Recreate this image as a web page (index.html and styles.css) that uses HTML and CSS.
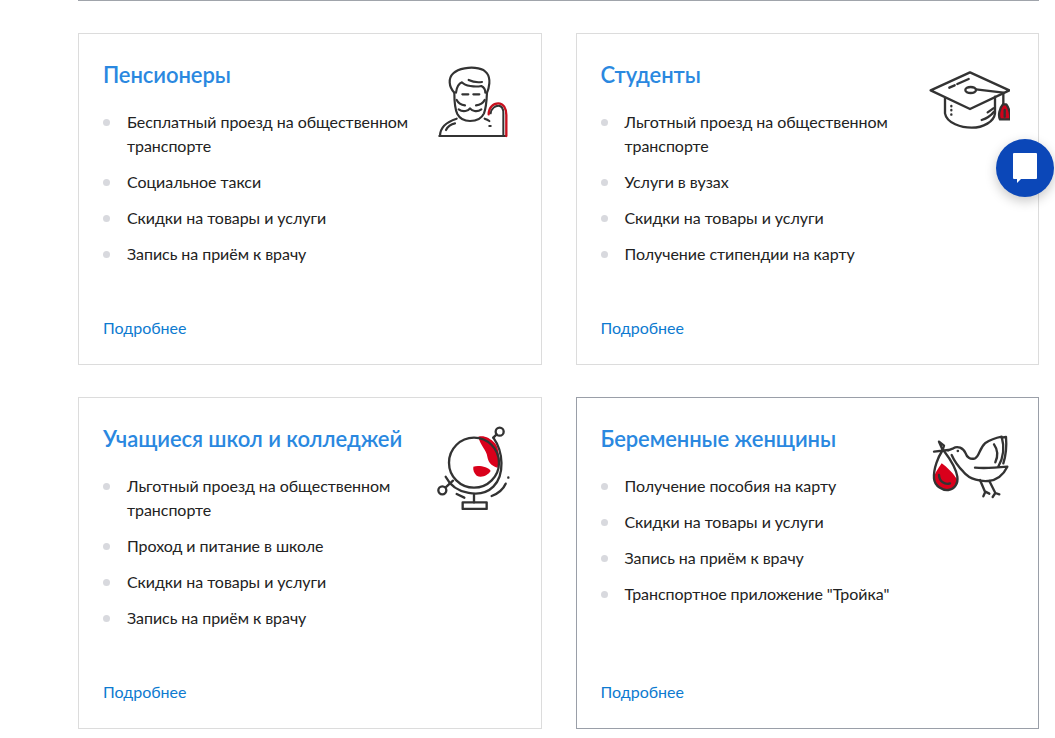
FILE: index.html
```html
<!DOCTYPE html>
<html lang="ru">
<head>
<meta charset="utf-8">
<title>Льготы</title>
<link rel="stylesheet" href="styles.css">
</head>
<body>
<main class="page">
  <section class="grid">
    <article class="card">
      <div class="body">
        <h2 class="title">Пенсионеры</h2>
        <ul class="list">
          <li>Бесплатный проезд на общественном транспорте</li>
          <li>Социальное такси</li>
          <li>Скидки на товары и услуги</li>
          <li>Запись на приём к врачу</li>
        </ul>
        <a class="more" href="#">Подробнее</a>
      </div>
      <svg class="icon" viewBox="24 36 252 252" fill="none" stroke="#333" stroke-width="6.500" stroke-linecap="round" stroke-linejoin="round">
        <path d="M103 128C86 110 84 85 100 70C115 55 150 50 175 55C197 59 210 75 208 100C207 110 205 120 201 128"/>
        <path d="M108 128C110 112 118 100 126 97C135 108 165 112 184 108C192 112 196 120 196 128"/>
        <path d="M146 90C158 96 172 98 186 96"/>
        <path d="M103 128C103 150 104 175 112 192C120 207 135 213 150 213C170 213 185 205 192 190C198 175 200 150 201 128"/>
        <path d="M110 150C114 158 122 164 135 166M194 150C190 158 182 164 168 166"/>
        <path d="M127 133H145M160 133H178"/>
        <path d="M116 178C130 188 145 182 150 175C156 182 170 188 184 178"/>
        <path d="M60 258C60 235 78 216 110 206M194 206C200 208 204 210 208 213"/>
        <path d="M78 240C84 228 94 222 105 220"/>
        <path d="M58 258H258"/>
        <path d="M208 228H212"/>
        <path d="M206 193C206 172 220 160 235 160C250 160 259 175 259 195V258" stroke="#c8101e" stroke-width="7"/>
        <path d="M212 190C214 175 226 167 235 167C245 167 250 176 250 190V258" stroke="#333" stroke-width="6"/>
      </svg>
    </article>

    <article class="card">
      <div class="body">
        <h2 class="title">Студенты</h2>
        <ul class="list">
          <li>Льготный проезд на общественном транспорте</li>
          <li>Услуги в вузах</li>
          <li>Скидки на товары и услуги</li>
          <li>Получение стипендии на карту</li>
        </ul>
        <a class="more" href="#">Подробнее</a>
      </div>
      <svg class="icon" viewBox="18 21 252 252" fill="none" stroke="#333" stroke-width="7" stroke-linecap="round" stroke-linejoin="round">
        <path d="M150 52L268 106L150 162L32 106Z"/>
        <path d="M88 98L104 91M112 87L146 72"/>
        <ellipse cx="152" cy="105" rx="16" ry="9"/>
        <path d="M168 103L250 113V148"/>
        <path d="M249 148C238 160 234 182 240 193H270C273 182 268 160 259 148Z" fill="#d0021b"/>
        <path d="M254 165V185"/>
        <path d="M75 130V175C80 205 125 218 155 218C190 218 222 200 225 175V125"/>
        <path d="M94 153V154M94 165V166M94 178V179"/>
        <path d="M203 172L220 160M185 195C200 190 214 180 222 170"/>
      </svg>
    </article>

    <article class="card">
      <div class="body">
        <h2 class="title">Учащиеся школ и колледжей</h2>
        <ul class="list">
          <li>Льготный проезд на общественном транспорте</li>
          <li>Проход и питание в школе</li>
          <li>Скидки на товары и услуги</li>
          <li>Запись на приём к врачу</li>
        </ul>
        <a class="more" href="#">Подробнее</a>
      </div>
      <svg class="icon" viewBox="9 33 252 252" fill="none" stroke="#333" stroke-width="7" stroke-linecap="round" stroke-linejoin="round">
        <path d="M160 65C175 60 195 68 210 85C222 100 225 130 218 158C205 155 190 145 187 125C185 105 165 90 160 65Z" fill="#d9001b" stroke="none"/>
        <path d="M145 155C160 150 190 155 197 168C190 180 170 190 155 182C148 175 143 165 145 155Z" fill="#d9001b" stroke="none"/>
        <circle cx="147" cy="143" r="75"/>
        <path d="M62 185C90 240 170 250 205 215C240 180 235 110 205 68"/>
        <circle cx="224" cy="50" r="12"/>
        <circle cx="52" cy="226" r="12"/>
        <path d="M205 68L215 58M62 217L84 197"/>
        <path d="M147 240V262"/>
        <rect x="113" y="262" width="72" height="20"/>
        <path d="M95 237L118 248M200 243C220 235 235 222 242 206M250 187V188"/>
      </svg>
    </article>

    <article class="card card-active">
      <div class="body">
        <h2 class="title">Беременные женщины</h2>
        <ul class="list">
          <li>Получение пособия на карту</li>
          <li>Скидки на товары и услуги</li>
          <li>Запись на приём к врачу</li>
          <li>Транспортное приложение "Тройка"</li>
        </ul>
        <a class="more" href="#">Подробнее</a>
      </div>
      <svg class="icon" viewBox="18 3 252 252" fill="none" stroke="#333" stroke-width="7" stroke-linecap="round" stroke-linejoin="round">
        <path d="M65 115C55 130 40 150 42 165C45 185 65 197 85 195C100 193 113 180 112 165C105 150 80 125 65 115Z" fill="#d9001b" stroke="none"/>
        <path d="M68 75C55 95 40 130 42 160C44 185 70 197 85 195C105 192 115 175 112 155C108 130 85 95 72 78"/>
        <path d="M57 50L68 75M42 80L85 75M68 75L72 62L57 50"/>
        <path d="M57 150C58 170 75 180 90 175"/>
        <path d="M84 76L100 70C112 62 130 68 137 85C140 95 150 105 165 100C178 95 178 70 195 55C210 45 230 38 245 35C252 60 255 90 235 125"/>
        <path d="M165 128C190 130 230 128 262 125C250 150 230 165 205 168C185 170 150 165 130 140C115 125 103 108 95 90"/>
        <path d="M245 38L258 36C260 60 258 90 250 115M222 58C234 75 235 92 226 112"/>
        <path d="M180 165L195 200M190 214L196 200L208 206M208 168L226 204M218 216L226 204L238 208"/>
        <path d="M113 78H114"/>
      </svg>
    </article>
  </section>
</main>
<button class="chat" type="button" aria-label="Чат">
  <svg viewBox="0 0 26 32" width="26" height="32"><path d="M2 1H24a1 1 0 0 1 1 1V26a1 1 0 0 1-1 1H9L5 31V27H2a1 1 0 0 1-1-1V2a1 1 0 0 1 1-1Z" fill="#fff"/></svg>
</button>
</body>
</html>
```

FILE: styles.css
```css
html, body {
  margin: 0;
  padding: 0;
  background: #fff;
}

body {
  font-family: Lato, "Noto Sans", sans-serif;
  color: #222;
  overflow: hidden;
  height: 738px;
}

.page {
  width: 961px;
  margin-left: 78px;
  border-top: 1px solid #a0a4ab;
  padding-top: 32px;
}

.grid {
  display: grid;
  grid-template-columns: 1fr 1fr;
  column-gap: 34px;
  row-gap: 32px;
}

.card {
  display: grid;
  grid-template-columns: 325px 84px;
  height: 332px;
  box-sizing: border-box;
  border: 1px solid #dcdcdc;
  padding: 28px 0 24px 24px;
}

.card-active {
  border-color: #9a9fa8;
}

.body {
  display: flex;
  flex-direction: column;
  min-width: 0;
}

.title {
  margin: 0;
  font-size: 22px;
  line-height: 26px;
  font-weight: 600;
  letter-spacing: -0.08px;
  color: #2a88e0;
  white-space: nowrap;
}

.list {
  list-style: none;
  margin: 22px 0 0;
  padding: 0;
  display: flex;
  flex-direction: column;
  gap: 12px;
}

.list li {
  position: relative;
  padding-left: 24px;
  font-size: 16px;
  line-height: 24px;
  letter-spacing: -0.05px;
  color: #222;
}

.list li::before {
  content: "";
  position: absolute;
  left: 0;
  top: 9px;
  width: 7px;
  height: 7px;
  border-radius: 50%;
  background: #d8d9de;
}

.more {
  margin-top: auto;
  font-size: 16px;
  line-height: 24px;
  color: #0d7ad0;
  text-decoration: none;
}

.icon {
  width: 84px;
  height: 84px;
  display: block;
}

.chat {
  position: fixed;
  left: 996px;
  top: 139px;
  width: 58px;
  height: 58px;
  border: 0;
  padding: 0;
  border-radius: 50%;
  background: #0b47b8;
  box-shadow: 0 4px 12px rgba(0, 0, 0, 0.22);
  display: flex;
  align-items: center;
  justify-content: center;
}

.chat svg {
  display: block;
}
```
